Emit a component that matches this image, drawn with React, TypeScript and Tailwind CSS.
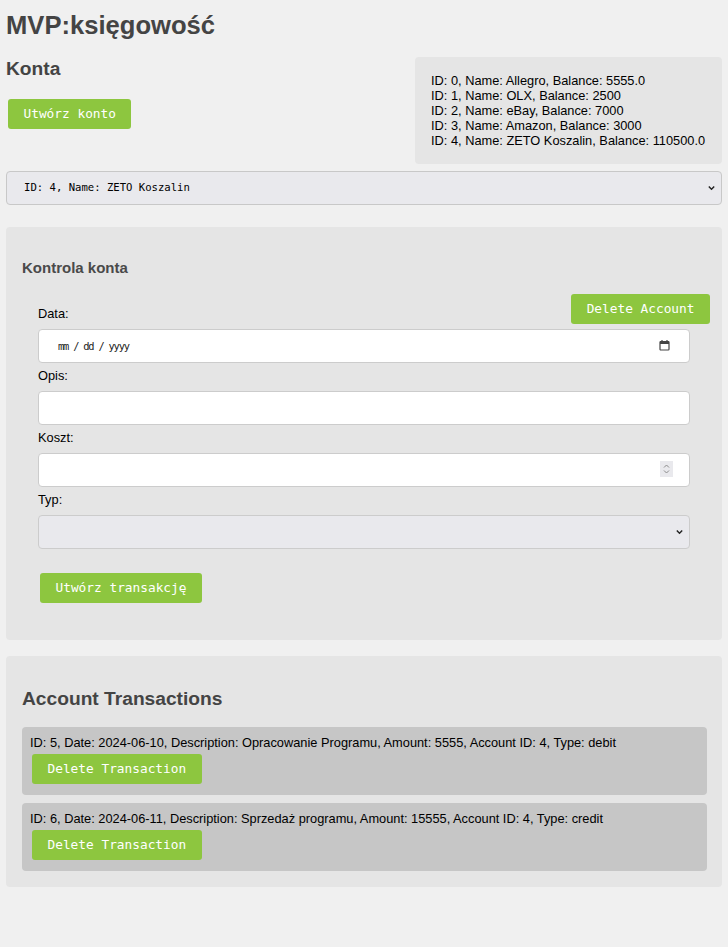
import React, { useState } from 'react';

interface Account {
    id: number;
    name: string;
    balance: string;
}

interface Transaction {
    id: number;
    date: string;
    description: string;
    amount: number;
    accountId: number;
    type: string;
}

const ACCOUNTS: Account[] = [
    { id: 0, name: 'Allegro', balance: '5555.0' },
    { id: 1, name: 'OLX', balance: '2500' },
    { id: 2, name: 'eBay', balance: '7000' },
    { id: 3, name: 'Amazon', balance: '3000' },
    { id: 4, name: 'ZETO Koszalin', balance: '110500.0' },
];

const TRANSACTIONS: Transaction[] = [
    { id: 5, date: '2024-06-10', description: 'Opracowanie Programu', amount: 5555, accountId: 4, type: 'debit' },
    { id: 6, date: '2024-06-11', description: 'Sprzedaż programu', amount: 15555, accountId: 4, type: 'credit' },
];

const sans = "font-['Liberation_Sans',Arial,sans-serif]";
const mono = "font-['DejaVu_Sans_Mono',monospace]";
const btn = `h-[30px] px-[15.5px] flex items-center justify-center rounded-[3px] bg-[#8dc63f] text-white text-[12.8px] ${mono} whitespace-nowrap`;
const field = 'block w-full h-[34px] rounded-[4px] border border-[#cccccc]';
const label = 'block mt-[5px] mb-[8px] text-[12.8px] leading-[15px] text-black';

const Chevron = () => (
    <svg className="pointer-events-none absolute right-[7px] top-1/2 -translate-y-1/2" width="7" height="5" viewBox="0 0 7 5" fill="none">
        <path d="M0.8 1L3.5 3.8L6.2 1" stroke="#222" strokeWidth="1.4" />
    </svg>
);

const App: React.FC = () => {
    const [selected, setSelected] = useState('4');
    const [transactions, setTransactions] = useState(TRANSACTIONS);

    return (
        <div className={`min-h-[947px] bg-[#f0f0f0] px-[6px] pt-[10px] pb-10 text-[#444] ${sans}`}>
            <h1 className="text-[25.6px] leading-[30px] font-bold">MVP:księgowość</h1>

            {/* Konta header */}
            <div className="mt-[17px] flex items-start justify-between">
                <div className="pt-[1px]">
                    <h2 className="text-[19.2px] leading-[22px] font-bold">Konta</h2>
                    <button className={`${btn} mt-[19px] ml-[2px]`}>Utwórz konto</button>
                </div>
                <div className="w-[307px] rounded-[4px] bg-[#e5e5e5] px-4 py-4 text-[12.8px] leading-[15px] text-black whitespace-nowrap">
                    {ACCOUNTS.map(a => (
                        <div key={a.id}>ID: {a.id}, Name: {a.name}, Balance: {a.balance}</div>
                    ))}
                </div>
            </div>

            <div className="relative mt-[7px]">
                <select
                    value={selected}
                    onChange={e => setSelected(e.target.value)}
                    className={`appearance-none block w-full h-[34px] rounded-[4px] border border-[#c8c8c8] bg-[#e9e9ed] pl-[17px] pr-6 text-[10.6px] text-black ${mono}`}>
                    {ACCOUNTS.map(a => (
                        <option key={a.id} value={a.id}>ID: {a.id}, Name: {a.name}</option>
                    ))}
                </select>
                <Chevron />
            </div>

            {/* Kontrola konta */}
            <div className="mt-[22px] rounded-[4px] bg-[#e5e5e5] pt-[32px] pb-[37px] pl-4 pr-3">
                <h3 className="text-[15px] leading-[17px] font-bold text-[#4a4a4a]">Kontrola konta</h3>
                <div className="pl-4">
                    <div className="mt-[18px] flex items-end justify-between">
                        <label className="mb-[3px] text-[12.8px] leading-[15px] text-black">Data:</label>
                        <button className={btn}>Delete Account</button>
                    </div>
                    <div className="mr-5">
                        <div className="relative mt-[5px]">
                            <input
                                type="text"
                                placeholder="mm / dd / yyyy"
                                className={`${field} bg-white pl-[19px] pr-8 text-[10.4px] tracking-[-1.2px] text-black placeholder:text-[#222] ${mono}`} />
                            <svg className="pointer-events-none absolute right-[20px] top-[10px]" width="11" height="12" viewBox="0 0 11 12" fill="none">
                                <rect x="1" y="2.5" width="9" height="8.5" rx="0.8" stroke="#444" strokeWidth="1.2" />
                                <rect x="1" y="2.5" width="9" height="2.5" fill="#444" />
                                <path d="M3 1V3M8 1V3" stroke="#444" strokeWidth="1.2" />
                            </svg>
                        </div>
                        <label className={label}>Opis:</label>
                        <input type="text" className={`${field} bg-white px-3 text-[12.8px]`} />
                        <label className={label}>Koszt:</label>
                        <div className="relative">
                            <input type="text" inputMode="numeric" className={`${field} bg-white pl-3 pr-8 text-[12.8px]`} />
                            <div className="pointer-events-none absolute right-[17px] top-[8px] flex h-[16px] w-[13px] flex-col items-center justify-center gap-[2px] bg-[#e9e9ed]">
                                <svg width="7" height="4" viewBox="0 0 7 4" fill="none"><path d="M1 3.5L3.5 1L6 3.5" stroke="#8a8a8a" strokeWidth="1" /></svg>
                                <svg width="7" height="4" viewBox="0 0 7 4" fill="none"><path d="M1 0.5L3.5 3L6 0.5" stroke="#8a8a8a" strokeWidth="1" /></svg>
                            </div>
                        </div>
                        <label className={label}>Typ:</label>
                        <div className="relative">
                            <select className={`${field} appearance-none bg-[#e9e9ed] pl-3 pr-6 text-[10.6px]`}></select>
                            <Chevron />
                        </div>
                    </div>
                    <button className={`${btn} mt-[24px] ml-[2px]`}>Utwórz transakcję</button>
                </div>
            </div>

            {/* Account Transactions */}
            <div className="mt-4 rounded-[4px] bg-[#e5e5e5] pt-[32px] pb-4 pl-4 pr-[15px]">
                <h2 className="text-[19.2px] leading-[22px] font-bold">Account Transactions</h2>
                <div className="mt-[17px] flex flex-col gap-2">
                    {transactions.map(t => (
                        <div key={t.id} className="rounded-[4px] bg-[#c6c6c6] pt-2 pb-[11px] px-2">
                            <p className="text-[12.8px] leading-[15px] text-black">
                                ID: {t.id}, Date: {t.date}, Description: {t.description}, Amount: {t.amount}, Account ID: {t.accountId}, Type: {t.type}
                            </p>
                            <button
                                onClick={() => setTransactions(ts => ts.filter(x => x.id !== t.id))}
                                className={`${btn} mt-1 ml-[2px]`}>
                                Delete Transaction
                            </button>
                        </div>
                    ))}
                </div>
            </div>
        </div>
    );
};

export default App;
